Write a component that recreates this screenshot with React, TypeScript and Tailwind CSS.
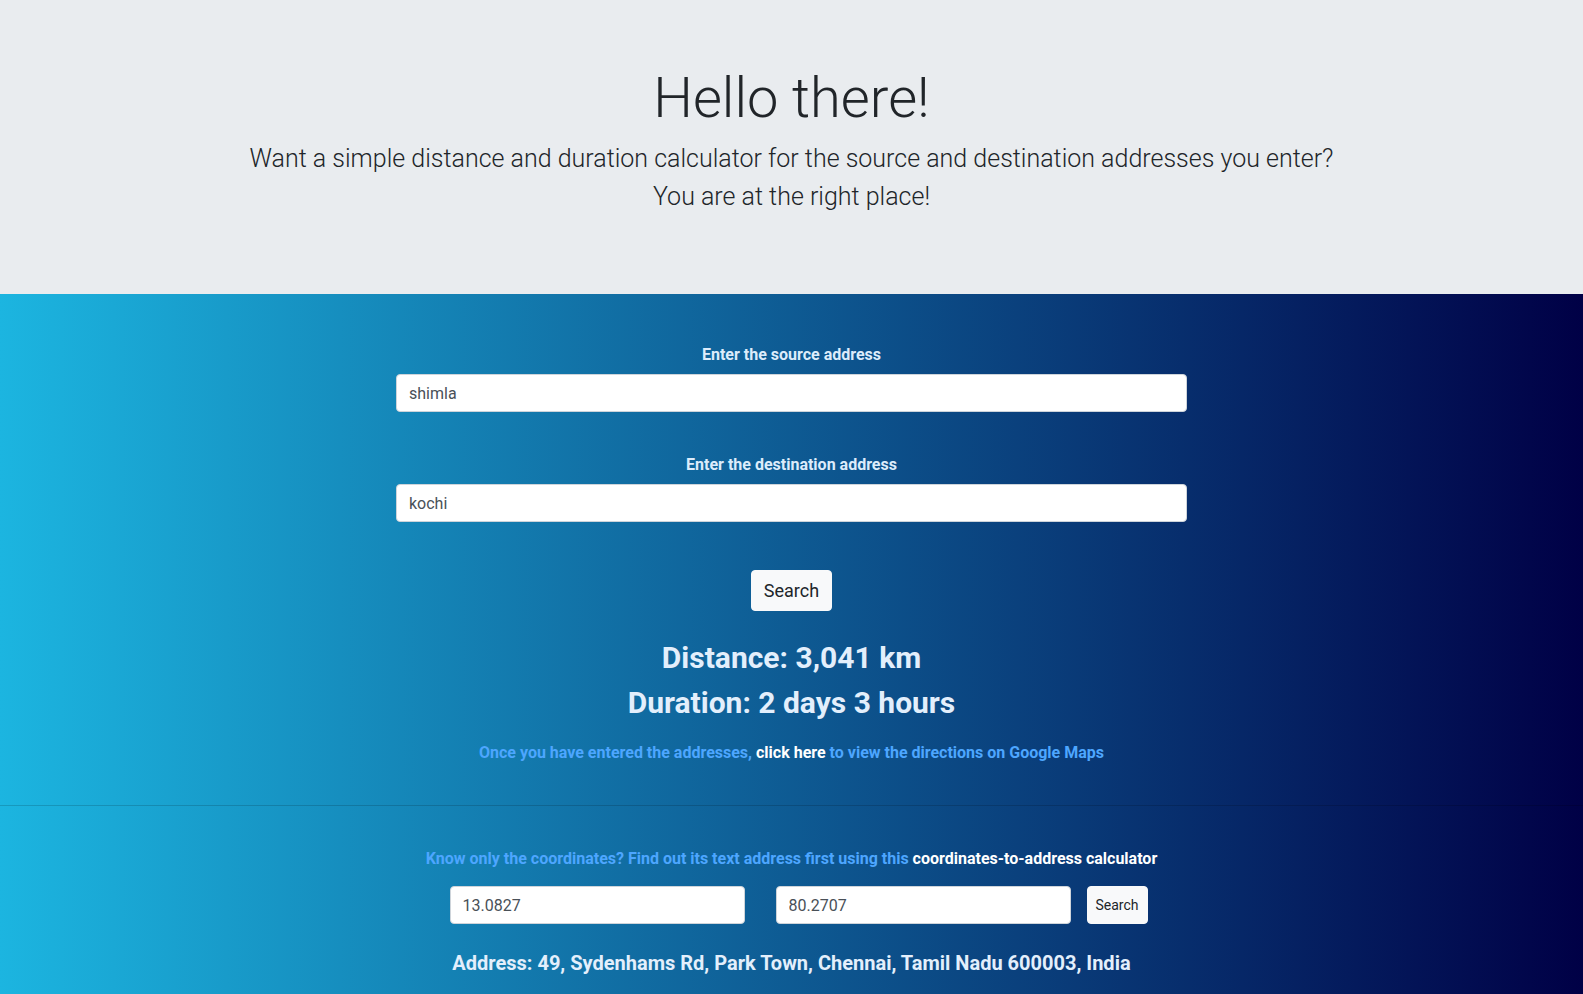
import React from "react";

export default function App() {
  return (
    <div className="min-h-screen flex flex-col font-['Roboto',sans-serif]">
      <header className="bg-[#e9ecef] h-[294px] pt-[65px] text-center text-[#212529]">
        <h1 className="text-[56px] font-light leading-[67px] mb-[8px]">Hello there!</h1>
        <p className="text-[25px] font-light leading-[38px]">
          Want a simple distance and duration calculator for the source and destination addresses you enter?
          <br />
          You are at the right place!
        </p>
      </header>
      <main className="flex-1 bg-[linear-gradient(to_right,#1cb5e0,#000046)] pb-8">
        <section className="flex flex-col items-center pt-[49px]">
          <label className="text-[16px] font-bold leading-6 text-[#dcecfb] mb-[7px]">Enter the source address</label>
          <input
            readOnly
            value="shimla"
            className="w-[791px] h-[38px] bg-white border border-[#ced4da] rounded-[4px] px-3 text-[16px] text-[#495057] outline-none"
          />
          <label className="mt-[41px] text-[16px] font-bold leading-6 text-[#dcecfb] mb-[7px]">Enter the destination address</label>
          <input
            readOnly
            value="kochi"
            className="w-[791px] h-[38px] bg-white border border-[#ced4da] rounded-[4px] px-3 text-[16px] text-[#495057] outline-none"
          />
          <button className="mt-12 h-[41px] px-3 bg-[#f8f9fa] border border-[#f8f9fa] rounded-[4px] text-[18px] leading-[27px] text-[#212529]">
            Search
          </button>
          <h3 className="mt-[29px] text-[30px] font-bold leading-[36px] text-[#e3effc]">Distance: 3,041 km</h3>
          <h3 className="mt-[9px] text-[30px] font-bold leading-[36px] text-[#e3effc]">Duration: 2 days 3 hours</h3>
          <p className="mt-5 text-[16px] font-bold leading-6 text-[#4da6ff]">
            Once you have entered the addresses, <span className="text-white">click here</span> to view the directions on Google Maps
          </p>
        </section>
        <hr className="mt-10 border-0 border-t border-[rgba(0,0,0,0.15)]" />
        <section className="flex flex-col items-center pt-[41px]">
          <p className="text-[16px] font-bold leading-6 text-[#4da6ff]">
            Know only the coordinates? Find out its text address first using this{" "}
            <span className="text-white">coordinates-to-address calculator</span>
          </p>
          <div className="mt-[15px] flex items-stretch pl-[14px]">
            <input
              readOnly
              value="13.0827"
              className="w-[295px] h-[38px] bg-white border border-[#ced4da] rounded-[4px] px-3 text-[16px] text-[#495057] outline-none"
            />
            <input
              readOnly
              value="80.2707"
              className="ml-[31px] w-[295px] h-[38px] bg-white border border-[#ced4da] rounded-[4px] px-3 text-[16px] text-[#495057] outline-none"
            />
            <button className="ml-4 w-[61px] bg-[#f8f9fa] border border-[#f8f9fa] rounded-[4px] text-[14px] text-[#212529]">
              Search
            </button>
          </div>
          <h5 className="mt-[27px] text-[20px] font-bold leading-6 text-[#e3effc]">
            Address: 49, Sydenhams Rd, Park Town, Chennai, Tamil Nadu 600003, India
          </h5>
        </section>
      </main>
    </div>
  );
}
